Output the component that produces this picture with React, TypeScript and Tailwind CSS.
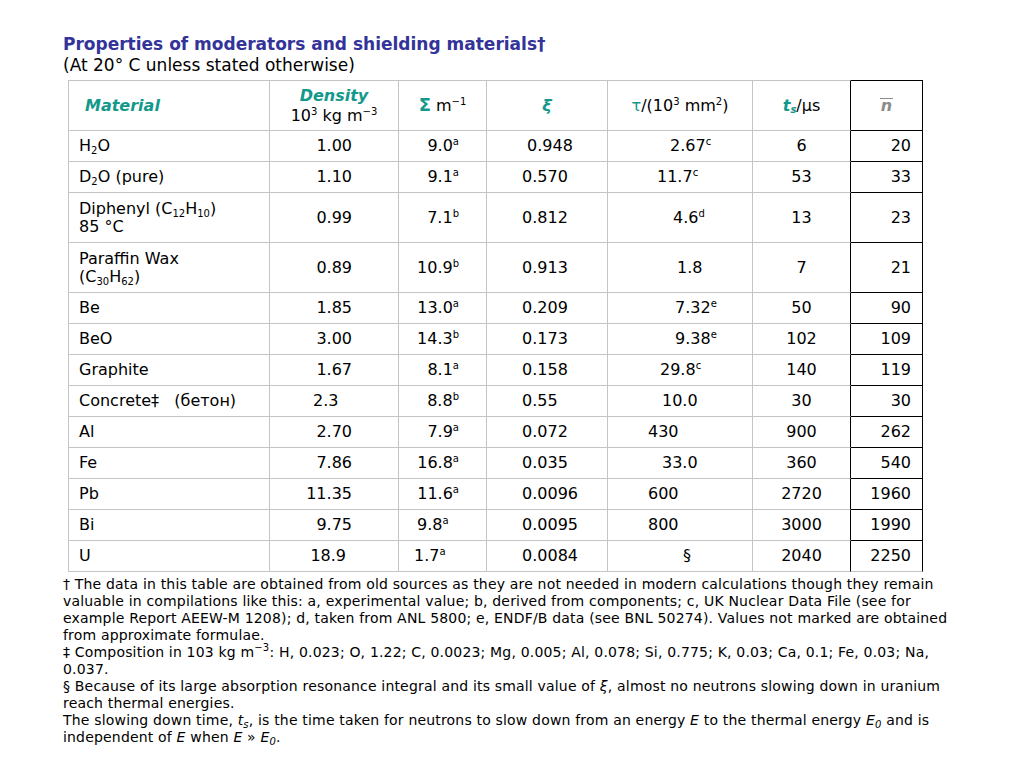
import React from 'react';

type Cell = { v: React.ReactNode; c: string };

const teal = 'text-[#13998b]';

const Sup = ({ children }: { children: React.ReactNode }) => (
    <sup className="text-[10px] top-[-0.6em]">{children}</sup>
);

const Sub = ({ children }: { children: React.ReactNode }) => (
    <sub className="text-[10px] bottom-[-0.3em]">{children}</sub>
);

type Row = {
    m: React.ReactNode;
    tall?: boolean;
    d: Cell;
    s: Cell;
    x: Cell;
    t: Cell;
    ts: string;
    n: string;
};

const R = (v: React.ReactNode, c: string): Cell => ({ v, c });

const rows: Row[] = [
    {
        m: <>H<Sub>2</Sub>O</>,
        d: R('1.00', 'text-right pr-[46px]'),
        s: R(<>9.0<Sup>a</Sup></>, 'text-right pr-[27px]'),
        x: R('0.948', 'pl-[40px]'),
        t: R(<>2.67<Sup>c</Sup></>, 'pl-[62px]'),
        ts: '6',
        n: '20',
    },
    {
        m: <>D<Sub>2</Sub>O (pure)</>,
        d: R('1.10', 'text-right pr-[46px]'),
        s: R(<>9.1<Sup>a</Sup></>, 'text-right pr-[27px]'),
        x: R('0.570', 'pl-[35px]'),
        t: R(<>11.7<Sup>c</Sup></>, 'pl-[49px]'),
        ts: '53',
        n: '33',
    },
    {
        m: <>Diphenyl (C<Sub>12</Sub>H<Sub>10</Sub>)<br />85 °C</>,
        tall: true,
        d: R('0.99', 'text-right pr-[46px]'),
        s: R(<>7.1<Sup>b</Sup></>, 'text-right pr-[27px]'),
        x: R('0.812', 'pl-[35px]'),
        t: R(<>4.6<Sup>d</Sup></>, 'pl-[65px]'),
        ts: '13',
        n: '23',
    },
    {
        m: <>Paraffin Wax<br />(C<Sub>30</Sub>H<Sub>62</Sub>)</>,
        tall: true,
        d: R('0.89', 'text-right pr-[46px]'),
        s: R(<>10.9<Sup>b</Sup></>, 'text-right pr-[27px]'),
        x: R('0.913', 'pl-[35px]'),
        t: R('1.8', 'pl-[69px]'),
        ts: '7',
        n: '21',
    },
    {
        m: 'Be',
        d: R('1.85', 'text-right pr-[46px]'),
        s: R(<>13.0<Sup>a</Sup></>, 'text-right pr-[27px]'),
        x: R('0.209', 'pl-[35px]'),
        t: R(<>7.32<Sup>e</Sup></>, 'pl-[67px]'),
        ts: '50',
        n: '90',
    },
    {
        m: 'BeO',
        d: R('3.00', 'text-right pr-[46px]'),
        s: R(<>14.3<Sup>b</Sup></>, 'text-right pr-[27px]'),
        x: R('0.173', 'pl-[35px]'),
        t: R(<>9.38<Sup>e</Sup></>, 'pl-[67px]'),
        ts: '102',
        n: '109',
    },
    {
        m: 'Graphite',
        d: R('1.67', 'text-right pr-[46px]'),
        s: R(<>8.1<Sup>a</Sup></>, 'text-right pr-[27px]'),
        x: R('0.158', 'pl-[35px]'),
        t: R(<>29.8<Sup>c</Sup></>, 'pl-[52px]'),
        ts: '140',
        n: '119',
    },
    {
        m: <>Concrete‡&nbsp;&nbsp; (бетон)</>,
        d: R('2.3', 'pl-[43px]'),
        s: R(<>8.8<Sup>b</Sup></>, 'text-right pr-[27px]'),
        x: R('0.55', 'pl-[35px]'),
        t: R('10.0', 'pl-[54px]'),
        ts: '30',
        n: '30',
    },
    {
        m: 'Al',
        d: R('2.70', 'text-right pr-[46px]'),
        s: R(<>7.9<Sup>a</Sup></>, 'text-right pr-[27px]'),
        x: R('0.072', 'pl-[35px]'),
        t: R('430', 'pl-[40px]'),
        ts: '900',
        n: '262',
    },
    {
        m: 'Fe',
        d: R('7.86', 'text-right pr-[46px]'),
        s: R(<>16.8<Sup>a</Sup></>, 'text-right pr-[27px]'),
        x: R('0.035', 'pl-[35px]'),
        t: R('33.0', 'pl-[54px]'),
        ts: '360',
        n: '540',
    },
    {
        m: 'Pb',
        d: R('11.35', 'text-right pr-[46px]'),
        s: R(<>11.6<Sup>a</Sup></>, 'text-right pr-[27px]'),
        x: R('0.0096', 'pl-[35px]'),
        t: R('600', 'pl-[40px]'),
        ts: '2720',
        n: '1960',
    },
    {
        m: 'Bi',
        d: R('9.75', 'text-right pr-[46px]'),
        s: R(<>9.8<Sup>a</Sup></>, 'pl-[18px]'),
        x: R('0.0095', 'pl-[35px]'),
        t: R('800', 'pl-[40px]'),
        ts: '3000',
        n: '1990',
    },
    {
        m: 'U',
        d: R('18.9', 'text-right pr-[52px]'),
        s: R(<>1.7<Sup>a</Sup></>, 'pl-[15px]'),
        x: R('0.0084', 'pl-[35px]'),
        t: R('§', 'pl-[75px]'),
        ts: '2040',
        n: '2250',
    },
];

const grey = 'border-r border-b border-[#c4c4c4]';

const App = () => {
    return (
        <div className="min-h-[768px] w-[1024px] bg-white pl-[63px] pt-[34px] text-black font-['DejaVu_Sans',Verdana,sans-serif]">
            <h1 className="text-[17px] leading-[21px] font-bold text-[#333399]">
                Properties of moderators and shielding materials†
            </h1>
            <p className="text-[17px] leading-[21px]">(At 20° C unless stated otherwise)</p>

            <table className="ml-[5px] mt-[4px] w-[855px] table-fixed border-separate border-spacing-0 text-[16px] leading-[18px]">
                <colgroup>
                    <col className="w-[202px]" />
                    <col className="w-[129px]" />
                    <col className="w-[88px]" />
                    <col className="w-[121px]" />
                    <col className="w-[145px]" />
                    <col className="w-[98px]" />
                    <col className="w-[72px]" />
                </colgroup>
                <thead>
                    <tr className="h-[51px] leading-[20px]">
                        <th className={`${grey} border-l border-t pl-[16px] text-left font-bold italic ${teal}`}>
                            Material
                        </th>
                        <th className={`${grey} border-t text-center font-normal`}>
                            <div className={`font-bold italic ${teal}`}>Density</div>
                            <div>10<Sup>3</Sup> kg m<Sup>−3</Sup></div>
                        </th>
                        <th className={`${grey} border-t text-center font-normal`}>
                            <span className={`font-bold text-[18px] ${teal}`}>Σ</span> m<Sup>−1</Sup>
                        </th>
                        <th className={`${grey} border-t text-center font-bold italic ${teal}`}>ξ</th>
                        <th className={`${grey} border-t text-center font-normal`}>
                            <span className={teal}>τ</span>/(10<Sup>3</Sup> mm<Sup>2</Sup>)
                        </th>
                        <th className="border-b border-r border-t border-b-[#c4c4c4] border-t-[#c4c4c4] border-r-black text-center font-normal">
                            <span className={`font-bold italic ${teal}`}>t<sub className="text-[10px]">s</sub></span>/μs
                        </th>
                        <th className="border-r border-t border-b border-black text-center font-bold italic text-[#8c8c8c]">
                            <span className="inline-block border-t-[1.5px] border-[#8c8c8c] px-[1px] leading-[14px]">n</span>
                        </th>
                    </tr>
                </thead>
                <tbody>
                    {rows.map((r, i) => {
                        const last = i === rows.length - 1;
                        return (
                            <tr key={i} className={r.tall ? 'h-[50px]' : 'h-[31px]'}>
                                <td className={`${grey} border-l pl-[10px] text-left`}>{r.m}</td>
                                <td className={`${grey} ${r.d.c}`}>{r.d.v}</td>
                                <td className={`${grey} ${r.s.c}`}>{r.s.v}</td>
                                <td className={`${grey} ${r.x.c}`}>{r.x.v}</td>
                                <td className={`${grey} ${r.t.c}`}>{r.t.v}</td>
                                <td className="border-b border-r border-b-[#c4c4c4] border-r-black text-center">{r.ts}</td>
                                <td
                                    className={`border-r border-b border-r-black pr-[11px] text-right ${
                                        last ? 'border-b-[#c4c4c4]' : 'border-b-black'
                                    }`}
                                >
                                    {r.n}
                                </td>
                            </tr>
                        );
                    })}
                </tbody>
            </table>

            <div className="mt-[4px] text-[14px] leading-[17px] tracking-[0.18px] whitespace-nowrap">
                <div>† The data in this table are obtained from old sources as they are not needed in modern calculations though they remain</div>
                <div>valuable in compilations like this: a, experimental value; b, derived from components; c, UK Nuclear Data File (see for</div>
                <div>example Report AEEW-M 1208); d, taken from ANL 5800; e, ENDF/B data (see BNL 50274). Values not marked are obtained</div>
                <div>from approximate formulae.</div>
                <div>‡ Composition in 103 kg m<Sup>−3</Sup>: H, 0.023; O, 1.22; C, 0.0023; Mg, 0.005; Al, 0.078; Si, 0.775; K, 0.03; Ca, 0.1; Fe, 0.03; Na,</div>
                <div>0.037.</div>
                <div>§ Because of its large absorption resonance integral and its small value of <i>ξ</i>, almost no neutrons slowing down in uranium</div>
                <div>reach thermal energies.</div>
                <div>
                    The slowing down time, <i>t<Sub>s</Sub></i>, is the time taken for neutrons to slow down from an energy <i>E</i> to the thermal energy <i>E<Sub>0</Sub></i> and is
                </div>
                <div>independent of <i>E</i> when <i>E</i> » <i>E<Sub>0</Sub></i>.</div>
            </div>
        </div>
    );
};

export default App;
